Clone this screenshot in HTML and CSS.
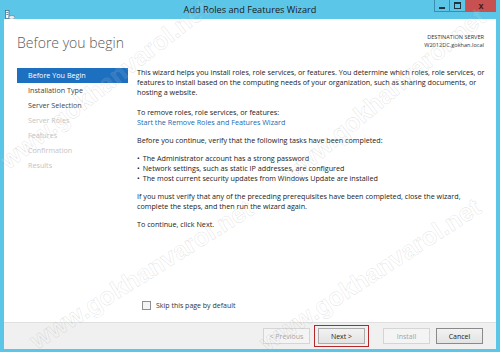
FILE: index.html
```html
<!DOCTYPE html>
<html>
<head>
  <title>Add Roles and Features Wizard</title>
  <link rel="stylesheet" href="styles.css">
</head>
<body>
  <div class="window">
    <div class="titlebar">
      <div class="app-icon">
        <svg width="10" height="10" viewBox="0 0 10 10">
          <rect x="0.5" y="0.5" width="3.5" height="8" fill="#f4f8fb" stroke="#4a6f8a" stroke-width="0.8"/>
          <rect x="1.3" y="2" width="2" height="0.8" fill="#4a6f8a"/>
          <rect x="1.3" y="4" width="2" height="0.8" fill="#4a6f8a"/>
          <ellipse cx="6.8" cy="7.4" rx="3" ry="2" fill="#e8eef2" stroke="#6a8799" stroke-width="0.7"/>
        </svg>
      </div>
      <div class="title">Add Roles and Features Wizard</div>
      <div class="win-buttons">
        <div class="wb wb-min"><span class="min-glyph"></span></div>
        <div class="wb wb-max"><span class="max-glyph"></span></div>
        <div class="wb wb-close">x</div>
      </div>
    </div>

    <div class="client">
      <div class="header">
        <h1>Before you begin</h1>
        <div class="dest">
          DESTINATION SERVER<br>
          W2012DC.gokhan.local
        </div>
      </div>

      <div class="main">
        <ul class="nav">
          <li class="selected">Before You Begin</li>
          <li>Installation Type</li>
          <li>Server Selection</li>
          <li class="disabled">Server Roles</li>
          <li class="disabled">Features</li>
          <li class="disabled">Confirmation</li>
          <li class="disabled">Results</li>
        </ul>

        <div class="content">
          <p class="intro">This wizard helps you install roles, role services, or features. You determine which roles, role services, or features to install based on the computing needs of your organization, such as sharing documents, or hosting a website.</p>
          <p>To remove roles, role services, or features:<br>
            <a href="#">Start the Remove Roles and Features Wizard</a></p>
          <p>Before you continue, verify that the following tasks have been completed:</p>
          <ul class="bullets">
            <li>The Administrator account has a strong password</li>
            <li>Network settings, such as static IP addresses, are configured</li>
            <li>The most current security updates from Windows Update are installed</li>
          </ul>
          <p>If you must verify that any of the preceding prerequisites have been completed, close the wizard, complete the steps, and then run the wizard again.</p>
          <p>To continue, click Next.</p>
        </div>
      </div>

      <label class="skip">
        <span class="checkbox"></span>
        Skip this page by default
      </label>

      <div class="footer">
        <button class="btn" disabled>&lt; Previous</button>
        <span class="highlight"><button class="btn">Next &gt;</button></span>
        <button class="btn btn-install" disabled>Install</button>
        <button class="btn btn-cancel">Cancel</button>
      </div>
    </div>

    <div class="watermark wm-a">www.gokhanvarol.net</div>
    <div class="watermark wm-b">www.gokhanvarol.net</div>
    <div class="watermark wm-c">www.gokhanvarol.net</div>
    <div class="watermark wm-d">www.gokhanvarol.net</div>
  </div>
</body>
</html>
```

FILE: styles.css
```css
body {
  margin: 0;
  font-family: "Open Sans", "Noto Sans", sans-serif;
  background-color: #5cc6e9;
}
.window {
  position: relative;
  width: 500px;
  height: 352px;
  overflow: hidden;
  background-color: #5cc6e9;
  display: flex;
  flex-direction: column;
}
.titlebar {
  height: 19px;
  display: grid;
  grid-template-columns: 1fr auto 1fr;
  align-items: start;
}
.app-icon {
  padding: 3px 0 0 5px;
}
.title {
  font-size: 9.2px;
  color: #1a1a1a;
  line-height: 19px;
}
.win-buttons {
  display: flex;
  justify-content: flex-end;
  padding-right: 4px;
}
.wb {
  height: 12px;
  box-sizing: border-box;
  display: flex;
  align-items: center;
  justify-content: center;
}
.wb-min,
.wb-max {
  width: 16px;
  border: 1px solid #3a8fb0;
  border-top: none;
}
.wb-max {
  border-left: none;
}
.min-glyph {
  width: 6px;
  height: 2px;
  background-color: #1e3440;
  margin-top: 4px;
}
.max-glyph {
  width: 5px;
  height: 4px;
  border: 1px solid #1e3440;
  border-top-width: 2px;
}
.wb-close {
  width: 30px;
  background-color: #c75050;
  color: #3a1a1a;
  font-family: "Liberation Sans", sans-serif;
  font-size: 9px;
  font-weight: bold;
  line-height: 12px;
}
.client {
  margin: 0 4px;
  height: 330px;
  background-color: white;
  display: flex;
  flex-direction: column;
}
.header {
  display: flex;
  justify-content: space-between;
  padding: 14px 12px 0 13px;
  height: 49px;
  box-sizing: border-box;
}
h1 {
  margin: 0;
  font-size: 14px;
  font-weight: 300;
  color: #5a5a5a;
  line-height: 20px;
}
.dest {
  font-size: 5.6px;
  line-height: 8px;
  text-align: right;
  color: #333;
}
.main {
  display: flex;
  padding: 0 0 0 13px;
  flex: 1;
}
.nav {
  list-style: none;
  margin: 0;
  padding: 0;
  width: 111px;
  flex-shrink: 0;
}
.nav li {
  height: 15px;
  line-height: 15px;
  padding-left: 11px;
  font-size: 7.2px;
  color: #444;
  white-space: nowrap;
}
.nav li.selected {
  background-color: #1d6fbf;
  color: white;
}
.nav li.disabled {
  color: #c4c4c4;
}
.content {
  padding: 0 10px 0 9px;
  font-size: 7.2px;
  line-height: 10px;
  color: #222;
  margin-top: -1px;
}
.content p {
  margin: 0 0 8px 0;
}
.content p.intro {
  margin-bottom: 10px;
}
.content a {
  color: #1b6ab0;
  text-decoration: none;
}
.bullets {
  margin: 0 0 8px 0;
  padding: 0;
  list-style: none;
}
.bullets li::before {
  content: "\2022";
  margin-right: 3px;
}
.skip {
  display: flex;
  align-items: center;
  gap: 5px;
  padding: 0 0 12px 138px;
  font-size: 7px;
  color: #333;
}
.checkbox {
  width: 7px;
  height: 7px;
  border: 1px solid #8e8f8f;
  background-color: #f4f4f4;
}
.footer {
  height: 27px;
  box-sizing: border-box;
  background-color: #f0f0f0;
  border-top: 1px solid #dfdfdf;
  display: flex;
  align-items: center;
  justify-content: flex-end;
  padding: 0 13px 0 0;
}
.btn {
  width: 47px;
  height: 16px;
  margin: 0;
  padding: 0;
  font-family: inherit;
  font-size: 7px;
  color: #222;
  background: linear-gradient(#f2f2f2, #e3e3e3);
  border: 1px solid #acacac;
}
.btn:disabled {
  color: #a3a3a3;
  background: #f4f4f4;
  border-color: #d5d5d5;
}
.highlight {
  margin-left: 4px;
  padding: 2px 3px;
  border: 1.5px solid #b3262a;
  display: flex;
}
.btn-install {
  margin-left: 14px;
}
.btn-cancel {
  margin-left: 6px;
  border-color: #8a8a8a;
}
.watermark {
  position: absolute;
  font-family: "Liberation Sans", sans-serif;
  font-weight: bold;
  font-size: 25px;
  white-space: nowrap;
  color: rgba(255, 255, 255, 0.1);
  -webkit-text-stroke: 0.5px rgba(160, 160, 160, 0.32);
  transform-origin: left bottom;
  pointer-events: none;
}
.wm-a {
  left: 12px;
  top: 146px;
  transform: rotate(-38deg);
}
.wm-b {
  left: 40px;
  top: 326px;
  transform: rotate(-32deg);
}
.wm-c {
  left: 294px;
  top: 161px;
  transform: rotate(-40deg);
}
.wm-d {
  left: 270px;
  top: 328px;
  transform: rotate(-33deg);
}
```
